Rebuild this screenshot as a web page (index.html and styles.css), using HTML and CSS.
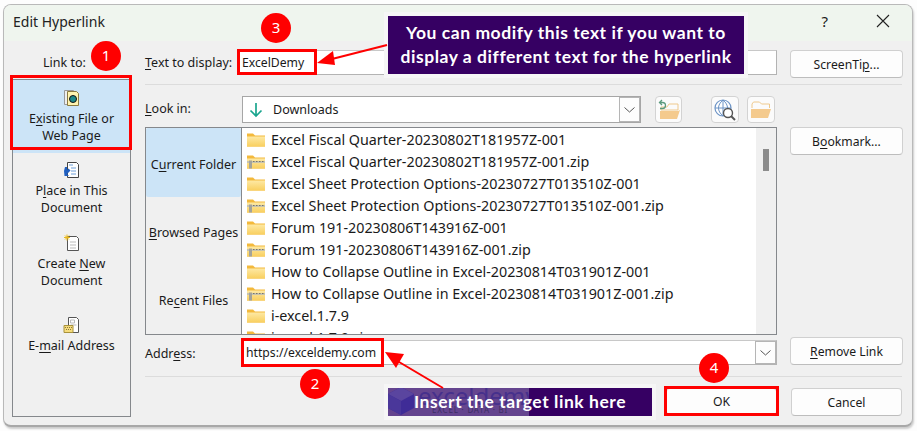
FILE: index.html
```html
<!DOCTYPE html>
<html lang="en">
<head>
<meta charset="utf-8">
<title>Edit Hyperlink</title>
<link rel="stylesheet" href="styles.css">
</head>
<body>
<svg class="defs" width="0" height="0" aria-hidden="true">
  <defs>
    <linearGradient id="fg" x1="0" y1="0" x2="0" y2="1"><stop offset="0" stop-color="#fde9a4"/><stop offset="1" stop-color="#f9cf5f"/></linearGradient>
  </defs>
  <symbol id="folder" viewBox="0 0 20 18">
    <path d="M1 2.500 h6 l2 2 h10 v11 h-18z" fill="#f3b93c"/>
    <path d="M1 5.500 h18 v10 h-18z" fill="url(#fg)"/>
  </symbol>
  <symbol id="zip" viewBox="0 0 20 18">
    <path d="M1 2.500 h6 l2 2 h10 v11 h-18z" fill="#f3b93c"/>
    <path d="M1 5.500 h18 v10 h-18z" fill="url(#fg)"/>
    <path d="M1 8 h18 v2 h-18z" fill="#c8c4ae"/>
    <path d="M7 8h1.500v1H7zM10 8h1.500v1H10zM13 8h1.500v1H13zM16 8h1.500v1H16z" fill="#77756a"/>
    <path d="M3 7.500h3v8H3z" fill="#a3a39b"/>
  </symbol>
</svg>
<div class="dialog">
  <header class="titlebar">
    <span class="title">Edit Hyperlink</span>
    <span class="help">?</span>
    <svg class="close" width="14" height="14" viewBox="0 0 14 14"><path d="M1 1 L13 13 M13 1 L1 13" stroke="#222" stroke-width="1.100" fill="none"/></svg>
  </header>
  <div class="content">
    <aside class="linkcol">
      <div class="linkto">Link to:</div>
      <nav class="places">
        <div class="place active">
          <svg class="picon" width="18" height="18" viewBox="0 0 18 18"><path d="M1.500 1.500h9v14h-9z" fill="#eee" stroke="#999"/><path d="M4.500 2.500h9l2 2v12h-11z" fill="#fff4b0" stroke="#8a7a40"/><circle cx="10" cy="10" r="3.500" fill="#1d8a8a" stroke="#111"/></svg>
          <div>E<u>x</u>isting File or<br>Web Page</div>
        </div>
        <div class="place">
          <svg class="picon" width="18" height="18" viewBox="0 0 18 18"><path d="M4.500 1.500h9l2 2v13h-11z" fill="#fff" stroke="#444"/><path d="M6 4h4M8 7h5M8 10h5M8 13h5" stroke="#6f9fd8"/><path d="M1 10l1-4h2v3l1.500-1.500 2 2L4 13l2 2H1.500z" fill="#1f5fc0"/></svg>
          <div>P<u>l</u>ace in This<br>Document</div>
        </div>
        <div class="place">
          <svg class="picon" width="18" height="18" viewBox="0 0 18 18"><path d="M4.500 2.500h9l2 2v12h-11z" fill="#fff" stroke="#555"/><path d="M7 8h6M7 11h6M7 14h6" stroke="#bbb"/><path d="M4 0.500v6M1 3.500h6M2 1.500l4 4M6 1.500l-4 4" stroke="#eab91c"/></svg>
          <div>Create <u>N</u>ew<br>Document</div>
        </div>
        <div class="place">
          <svg class="picon" width="18" height="18" viewBox="0 0 18 18"><path d="M5.500 1.500h8l2 2v13h-10z" fill="#fff" stroke="#555"/><path d="M7.500 4h4v3h-4zM7.500 9h6" stroke="#bbb" fill="none"/><path d="M1 9.500h9v7H1z" fill="#f6dc7c" stroke="#a8923c"/><path d="M2 11h1v1H2zM4 11h1v1H4zM6 11h1v1H6zM8 11h1v1H8zM3 13h1v1H3zM5 13h1v1H5zM7 13h1v1H7z" fill="#8a7a40"/></svg>
          <div>E-<u>m</u>ail Address</div>
        </div>
      </nav>
    </aside>
    <main class="form">
      <div class="row-text">
        <label class="lbl"><u>T</u>ext to display:</label>
        <div class="input text-input">ExcelDemy</div>
        <button class="btn tip">ScreenTi<u>p</u>...</button>
      </div>
      <hr class="rule rule-a">
      <div class="row-look">
        <label class="lbl look-lbl"><u>L</u>ook in:</label>
        <div class="combo">
          <svg class="dl" width="16" height="16" viewBox="0 0 16 16"><path d="M8 1v13M2.500 8.500 8 14l5.500-5.500" stroke="#1aa58e" stroke-width="1.700" fill="none"/></svg>
          <span class="combo-text">Downloads</span>
          <span class="drop"><svg width="11" height="6" viewBox="0 0 11 6"><path d="M.5.500 5.500 5l5-4.500" stroke="#555" fill="none"/></svg></span>
        </div>
        <button class="tool t-up"><svg width="24" height="22" viewBox="0 0 24 22"><path d="M4 9v-1h6l2-3h9v6H4z" fill="none" stroke="#efc98c"/><path d="M3 20V12h18l2-1-3 9z" fill="#f4ca8d"/><path d="M5 1 2.500 3.500 5 6M3 3.500h2.500a3 3 0 0 1 0 6H3" stroke="#5b9a7d" stroke-width="1.300" fill="none"/></svg></button>
        <button class="tool t-web"><svg width="24" height="24" viewBox="0 0 24 24"><circle cx="10" cy="10" r="8" fill="#fff" stroke="#6d94c6" stroke-width="1.200"/><path d="M2 10h16M10 2v16M10 2c-6 5-6 11 0 16M10 2c6 5 6 11 0 16" stroke="#6d94c6" fill="none"/><circle cx="15" cy="15" r="4.500" fill="#fff" stroke="#555" stroke-width="1.400"/><path d="M18 18l4 4" stroke="#555" stroke-width="2"/></svg></button>
        <button class="tool t-new"><svg width="24" height="20" viewBox="0 0 24 20"><path d="M3 8V4l1.500-2h6l2 2h8v4" fill="none" stroke="#efc98c"/><path d="M2 18V9h20l-3 9z" fill="#f4ca8d"/></svg></button>
        <button class="btn bookmark">B<u>o</u>okmark...</button>
      </div>
      <div class="browser">
        <div class="tabs">
          <div class="tab on">C<u>u</u>rrent Folder</div>
          <div class="tab"><span><u>B</u>rowsed Pages</span></div>
          <div class="tab">Re<u>c</u>ent Files</div>
        </div>
        <ul class="files">
          <li><svg class="fi"><use href="#folder"/></svg>Excel Fiscal Quarter-20230802T181957Z-001</li>
          <li><svg class="fi"><use href="#zip"/></svg>Excel Fiscal Quarter-20230802T181957Z-001.zip</li>
          <li><svg class="fi"><use href="#folder"/></svg>Excel Sheet Protection Options-20230727T013510Z-001</li>
          <li><svg class="fi"><use href="#zip"/></svg>Excel Sheet Protection Options-20230727T013510Z-001.zip</li>
          <li><svg class="fi"><use href="#folder"/></svg>Forum 191-20230806T143916Z-001</li>
          <li><svg class="fi"><use href="#zip"/></svg>Forum 191-20230806T143916Z-001.zip</li>
          <li><svg class="fi"><use href="#folder"/></svg>How to Collapse Outline in Excel-20230814T031901Z-001</li>
          <li><svg class="fi"><use href="#zip"/></svg>How to Collapse Outline in Excel-20230814T031901Z-001.zip</li>
          <li><svg class="fi"><use href="#folder"/></svg>i-excel.1.7.9</li>
          <li><svg class="fi"><use href="#zip"/></svg>i-excel.1.7.9.zip</li>
        </ul>
        <div class="scroll"><span class="thumb"></span></div>
      </div>
      <div class="row-addr">
        <label class="lbl addr-lbl">Addr<u>e</u>ss:</label>
        <div class="input addr-input">
          <span class="addr-text">https://exceldemy.com</span>
          <span class="drop drop-addr"><svg width="11" height="6" viewBox="0 0 11 6"><path d="M.5.500 5.500 5l5-4.500" stroke="#555" fill="none"/></svg></span>
        </div>
        <button class="btn remove"><u>R</u>emove Link</button>
      </div>
      <hr class="rule rule-b">
      <div class="row-actions">
        <button class="btn ok">OK</button>
        <button class="btn cancel">Cancel</button>
      </div>
    </main>
  </div>
</div>

<div class="mark m-link"></div>
<div class="mark m-text"></div>
<div class="mark m-addr"></div>
<div class="mark m-ok"></div>
<div class="badge b1">1</div>
<div class="badge b2">2</div>
<div class="badge b3">3</div>
<div class="badge b4">4</div>
<div class="note n-top">You can modify this text if you want to<br>display a different text for the hyperlink</div>
<div class="note n-bottom">
  <div class="wm">
    <svg class="wm-logo" width="28" height="30" viewBox="0 0 28 30"><path d="M14 1 27 8v14l-13 7L1 22V8z" fill="#3f2c97"/><path d="M14 15 1 8l13-7 13 7z" fill="#5a459f"/><path d="M14 15v14L1 22V8z" fill="#4a379a"/></svg>
    <span class="wm-name">exceldemy</span>
    <span class="wm-sub">EXCEL · DATA · BI</span>
  </div>
  <span class="note-text">Insert the target link here</span>
</div>
<svg class="arrows" width="917" height="431" viewBox="0 0 917 431">
  <path d="M387 45 L328 60" stroke="#f00" stroke-width="2" fill="none"/>
  <path d="M317 63 L333 51 L335 65z" fill="#f00"/>
  <path d="M443 388 L394 359" stroke="#f00" stroke-width="2" fill="none"/>
  <path d="M385 352 L404 354 L396 368z" fill="#f00"/>
</svg>
</body>
</html>
```

FILE: styles.css
```css
* { box-sizing: border-box; }
html, body { margin: 0; padding: 0; }
body {
  width: 917px;
  height: 431px;
  overflow: hidden;
  position: relative;
  background: #fdfdfd;
  font-family: "Noto Sans", "Open Sans", sans-serif;
  font-size: 12.500px;
  color: #1a1a1a;
}
.defs { position: absolute; }
u { text-underline-offset: 2px; text-decoration-thickness: 1px; }

.dialog {
  width: 910px;
  height: 423px;
  margin: 4px 0 0 3px;
  border: 1px solid #b9b9b9;
  border-bottom: 2px solid #a8a8a8;
  border-radius: 8px;
  background: #f0f0f0;
  box-shadow: 1px 2px 2px #ccc;
  overflow: hidden;
}
.titlebar {
  height: 36px;
  background: #eff5ee;
  display: flex;
  align-items: center;
  padding: 0 22px 4px 9px;
}
.title { font-size: 14px; flex: 1; color: #222; }
.help { font-size: 15px; margin-right: 48px; }

.content { display: flex; padding: 0 0 0 8px; height: 385px; }
.linkcol { width: 119px; display: flex; flex-direction: column; }
.linkto { height: 38px; line-height: 44px; text-align: center; padding-right: 14px; }
.places {
  flex: 1;
  border: 1px solid #85888c;
  display: flex;
  flex-direction: column;
  margin-bottom: 9px;
  width: 119px;
  text-align: center;
  line-height: 17px;
}
.place { height: 73px; padding-top: 8px; flex: none; }
.place:nth-child(4) { padding-top: 17px; }
.picon { display: block; margin: 0 auto 3px; }
.place.active {
  background: #cce4f7;
  height: 73px;
  padding-top: 9px;
}

.form { width: 758px; margin-left: 14px; position: relative; display: flex; flex-direction: column; }
.row-text { display: flex; align-items: flex-start; height: 43px; padding-top: 9px; }
.lbl { display: block; }
.row-text .lbl { width: 93px; line-height: 25px; }
.input { background: #fff; border: 1px solid #b3b3b3; border-top-color: #c8c8c8; height: 25px; font-size: 12.200px; }
.text-input { width: 539px; padding-left: 3px; line-height: 23px; flex: none; }
.btn {
  font: inherit;
  font-size: 12.200px;
  color: inherit;
  background: #fdfdfd;
  border: 1px solid #d0d0d0;
  border-bottom-color: #bdbdbd;
  border-radius: 4px;
  padding: 0;
  height: 28px;
  width: 113px;
  flex: none;
}
.tip { margin-left: 13px; }
.rule { margin: 0; border: 0; border-top: 1px solid #dcdcdc; width: 757px; }
.row-look { display: flex; align-items: flex-start; height: 42px; padding-top: 11px; }
.look-lbl { width: 97px; line-height: 26px; flex: none; }
.combo { width: 399px; flex: none; height: 27px; background: #fff; border: 1px solid #a6a6a6; display: flex; align-items: center; padding-left: 5px; }
.dl { margin-right: 9px; }
.combo-text { flex: 1; }
.drop { width: 21px; height: 25px; border: 1px solid #b5b5b5; display: flex; align-items: center; justify-content: center; background: #fdfdfd; }
.tool { width: 28px; height: 27px; padding: 0; border: 1px solid #d3d3d3; border-radius: 4px; background: #fbfbfb; display: flex; align-items: center; justify-content: center; flex: none; }
.t-up { margin-left: 14px; width: 27px; }
.t-web { margin-left: 29px; }
.t-new { margin-left: 8px; }
.bookmark { margin-left: 15px; margin-top: 31px; position: relative; z-index: 1; }

.browser { display: flex; width: 632px; height: 208px; border: 1px solid #85888c; background: #f0f0f0; }
.tabs { width: 96px; display: flex; flex-direction: column; text-align: center; line-height: 17px; border-right: 1px solid #85888c; flex: none; }
.tab { height: 69px; display: flex; align-items: center; justify-content: center; white-space: nowrap; padding-top: 2px; }
.tab.on { background: #cce4f7; border-radius: 2px; padding-top: 4px; }
.files { list-style: none; margin: 0; padding: 1px 0 0 4px; flex: 1; background: #fff; overflow: hidden; font-size: 14.300px; line-height: 22px; white-space: nowrap; }
.files li { display: flex; align-items: center; height: 22px; }
.fi { width: 20px; height: 18px; margin-right: 5px; flex: none; }
.scroll { width: 20px; background: #f0f0f0; flex: none; padding: 21px 6px 0 7px; }
.thumb { display: block; width: 6px; height: 22px; background: #8c8c8c; }

.row-addr { display: flex; align-items: flex-start; height: 41px; padding-top: 5px; }
.addr-lbl { width: 97px; line-height: 27px; flex: none; }
.addr-input { width: 535px; flex: none; display: flex; align-items: center; justify-content: space-between; padding-left: 3px; }
.drop-addr { width: 21px; height: 23px; }
.remove { margin-left: 13px; margin-top: -3px; }
.row-actions { display: flex; padding: 11px 0 0 521px; }
.btn.ok { width: 111px; height: 27px; }
.cancel { width: 111px; margin-left: 14px; }

.mark { position: absolute; border: 3px solid #f00; }
.m-link { left: 10px; top: 75px; width: 122px; height: 75px; }
.m-text { left: 237px; top: 49px; width: 80px; height: 26px; }
.m-addr { left: 241px; top: 338px; width: 143px; height: 29px; }
.m-ok { left: 664px; top: 386px; width: 115px; height: 30px; }
.badge {
  position: absolute;
  width: 30px;
  height: 30px;
  border-radius: 50%;
  background: #f00;
  color: #fff;
  text-align: center;
  line-height: 29px;
  font-size: 15px;
  font-family: "Noto Sans", sans-serif;
}
.b1 { left: 91px; top: 41px; }
.b2 { left: 300px; top: 369px; }
.b3 { left: 261px; top: 13px; }
.b4 { left: 699px; top: 353px; }
.note {
  position: absolute;
  background: #360063;
  outline: 4px solid #f6f6f6;
  color: #fff;
  font-family: "Lato", "Noto Sans", sans-serif;
  font-weight: 700;
  letter-spacing: .55px;
  text-align: center;
  white-space: nowrap;
}
.n-top { left: 388px; top: 16px; width: 356px; height: 58px; font-size: 17.500px; line-height: 24px; padding-top: 5px; }
.n-bottom { left: 388px; top: 388px; width: 264px; height: 28px; font-size: 17.500px; line-height: 28px; }
.note-text { position: relative; }
.wm { position: absolute; left: 0; top: 0; width: 141px; height: 28px; background: #65458f; overflow: hidden; text-align: left; letter-spacing: 0; font-family: "Noto Sans", sans-serif; }
.wm-logo { position: absolute; left: -1px; top: -2px; }
.wm-name { position: absolute; left: 30px; top: -4px; font-size: 24px; line-height: 24px; font-weight: 400; color: #46308c; }
.wm-sub { position: absolute; left: 44px; top: 17px; font-size: 8px; line-height: 10px; font-weight: 400; color: #3d2f66; letter-spacing: .8px; }
.arrows { position: absolute; left: 0; top: 0; pointer-events: none; }
```
